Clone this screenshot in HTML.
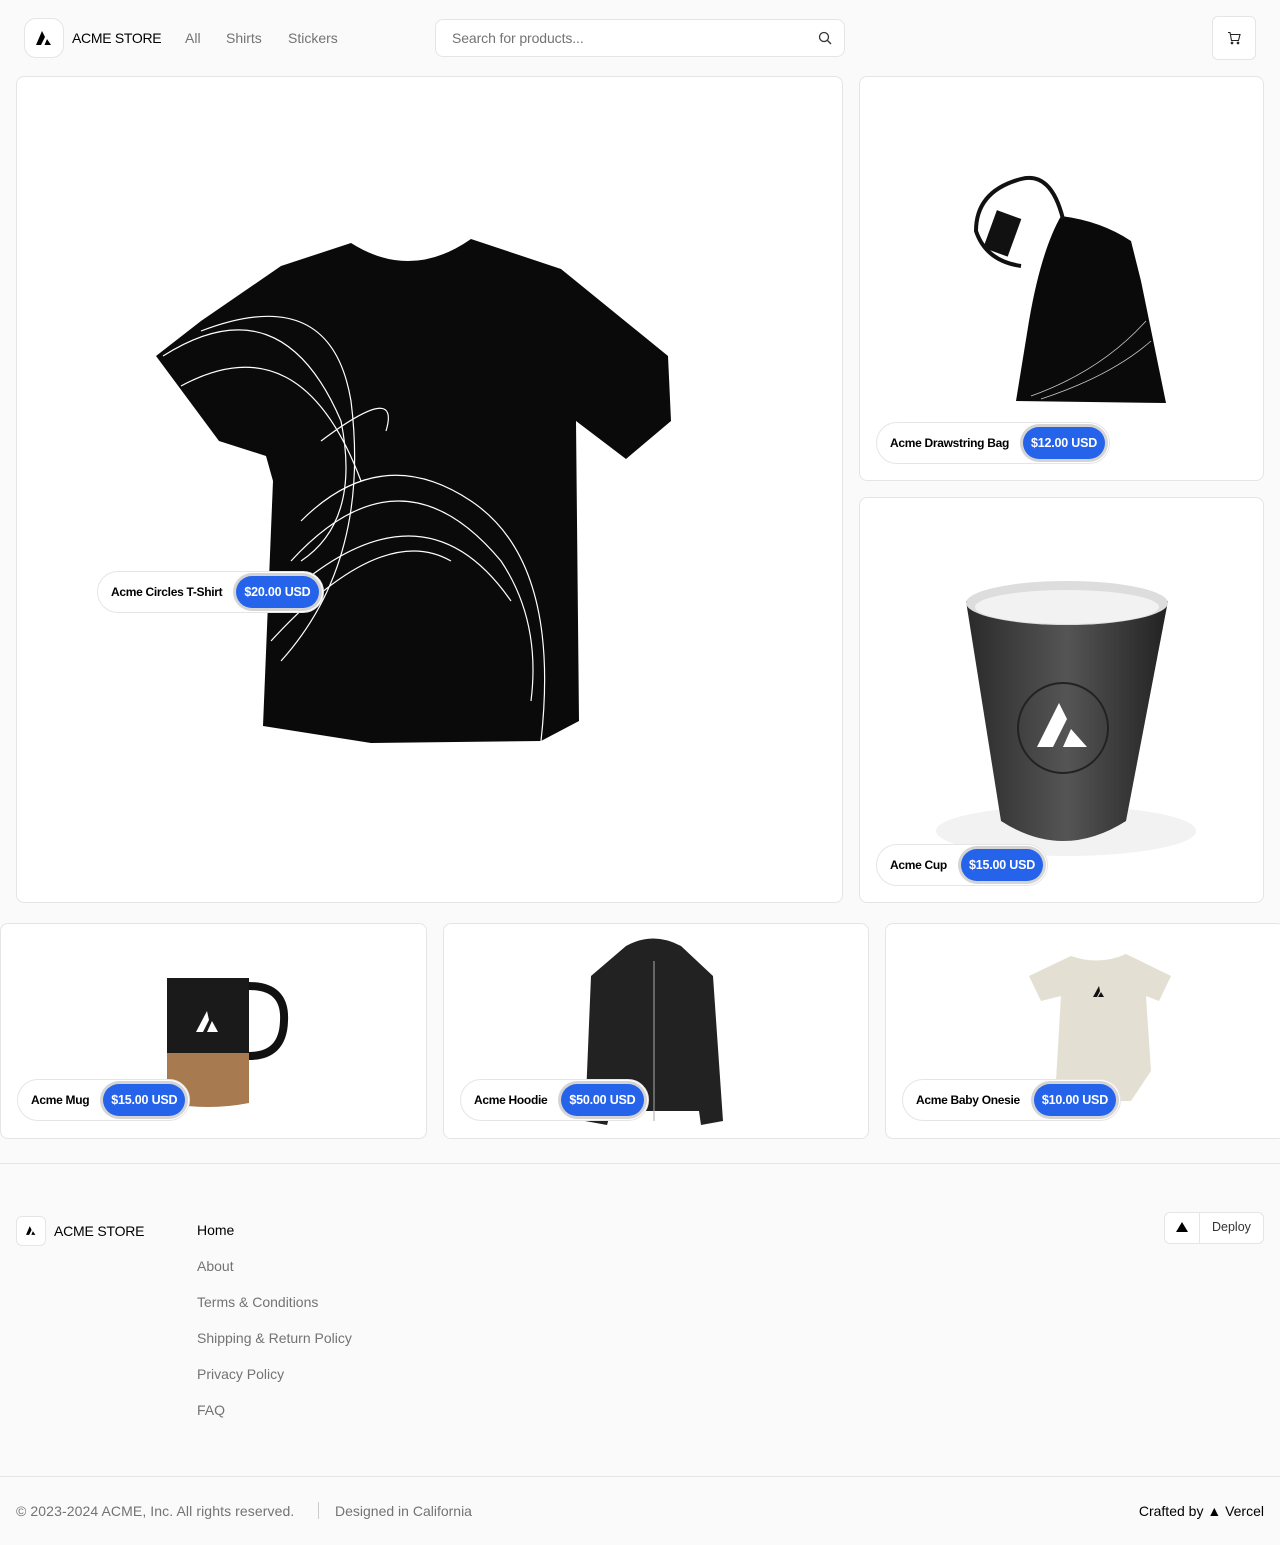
<!DOCTYPE html>
<html><head><meta charset="utf-8"><style>
*{box-sizing:border-box;margin:0;padding:0}
body{width:1280px;height:1545px;background:#fafafa;font-family:"Liberation Sans",sans-serif;position:relative;overflow:hidden;color:#000}
.abs{position:absolute}
.card{position:absolute;background:#fff;border:1px solid #e5e5e5;border-radius:8px;overflow:hidden}
.pill{position:absolute;display:flex;align-items:center;height:42px;background:#fff;border:1px solid #e5e5e5;border-radius:21px;padding:0 4px 0 13px;font-size:12px;font-weight:bold;letter-spacing:-0.3px}
.pill .n{margin-right:14px}
.pill .p{background:#2563eb;color:#fff;border-radius:17px;height:32px;line-height:32px;padding:0 8px;font-size:12.5px;font-weight:bold;box-shadow:0 0 0 3px #d4d4d4;letter-spacing:-0.2px}
.nav a{position:absolute;top:30px;font-size:14px;color:#737373}
.fl{position:absolute;left:197px;font-size:14px;color:#737373}
</style></head><body>
<div class="abs" style="left:24px;top:18px;width:40px;height:40px;border:1px solid #e5e5e5;border-radius:12px;background:#fff"></div>
<svg class="abs" style="left:36px;top:31px" width="16" height="14" viewBox="0 0 16 14"><path d="M6 0L0 14h5l4-8z M11 8l-2.5 6H15z" fill="#000"/></svg>
<div class="abs" style="left:72px;top:30px;font-size:14px;letter-spacing:-0.3px">ACME STORE</div>
<div class="nav"><a style="left:185px">All</a><a style="left:226px">Shirts</a><a style="left:288px">Stickers</a></div>
<div class="abs" style="left:435px;top:19px;width:410px;height:38px;border:1px solid #e5e5e5;border-radius:8px;background:#fff;font-size:14px;color:#737373;padding:10px 16px;letter-spacing:-0.1px">Search for products...</div>
<svg class="abs" style="left:818px;top:31px" width="14" height="14" viewBox="0 0 14 14" fill="none" stroke="#333" stroke-width="1.3"><circle cx="6" cy="6" r="4.5"/><path d="M9.5 9.5L13 13"/></svg>
<div class="abs" style="left:1212px;top:16px;width:44px;height:44px;border:1px solid #e5e5e5;border-radius:6px;background:#fff"></div>
<svg class="abs" style="left:1227px;top:31px" width="14" height="14" viewBox="0 0 14 14" fill="none" stroke="#222" stroke-width="1.1"><path d="M1 1.5h2l1.5 8h7l1.5-6H4"/><circle cx="5" cy="12" r="0.8"/><circle cx="11" cy="12" r="0.8"/></svg>

<div class="card" style="left:16px;top:76px;width:827px;height:827px">
<svg width="827" height="827" viewBox="16 76 827 827"><path d="M350 242Q410 280 470 238L560 268 667 355 670 420 625 458 575 420 578 720 540 740 370 742 262 725 272 480 265 455 218 440 155 355 200 320 280 265Z" fill="#0a0a0a"/>
<g fill="none" stroke="#fff" stroke-width="1.2"><path d="M162 355Q280 280 340 420 Q360 520 300 560"/><path d="M180 385Q300 320 360 480"/><path d="M200 330Q330 280 350 400 Q370 560 280 660"/><path d="M300 520Q380 440 470 500 Q560 560 540 740"/><path d="M290 560Q400 440 500 560 Q540 620 530 700"/><path d="M280 600Q420 470 510 600"/><path d="M270 640Q380 520 450 560"/><path d="M320 440Q400 380 385 430"/></g></svg>
<div class="pill" style="left:80px;top:494px"><span class="n">Acme Circles T-Shirt</span><span class="p">$20.00 USD</span></div>
</div>

<div class="card" style="left:859px;top:76px;width:405px;height:405px">
<svg width="405" height="405" viewBox="859 76 405 405"><path d="M1060 215Q1100 220 1130 240L1140 280 1165 402 1015 400 1028 320Q1040 250 1060 215Z" fill="#0a0a0a"/><path d="M1062 218Q1050 170 1020 178Q975 190 975 230Q985 260 1020 265" fill="none" stroke="#111" stroke-width="4"/><rect x="988" y="212" width="26" height="40" fill="#111" transform="rotate(20 1000 233)"/><g fill="none" stroke="#ccc" stroke-width="0.8"><path d="M1030 395Q1100 370 1145 320"/><path d="M1040 398Q1110 375 1150 340"/></g></svg>
<div class="pill" style="left:16px;top:345px"><span class="n">Acme Drawstring Bag</span><span class="p">$12.00 USD</span></div>
</div>

<div class="card" style="left:859px;top:497px;width:405px;height:406px">
<svg width="405" height="406" viewBox="859 497 405 406"><defs><linearGradient id="g" x1="0" x2="1"><stop offset="0" stop-color="#2a2a2a"/><stop offset=".5" stop-color="#555"/><stop offset="1" stop-color="#222"/></linearGradient></defs><ellipse cx="1065" cy="830" rx="130" ry="25" fill="#f2f2f2"/><path d="M965 600L1000 820Q1062 860 1125 820L1167 600Z" fill="url(#g)"/><ellipse cx="1066" cy="602" rx="101" ry="22" fill="#ddd"/><ellipse cx="1066" cy="606" rx="92" ry="17" fill="#f2f2f2"/><circle cx="1062" cy="727" r="45" fill="none" stroke="#222" stroke-width="2"/><path d="M1058 702L1036 746h16l14-28z M1070 728l-8 18h24z" fill="#fff"/></svg>
<div class="pill" style="left:16px;top:346px"><span class="n">Acme Cup</span><span class="p">$15.00 USD</span></div>
</div>

<div class="card" style="left:0;top:923px;width:427px;height:216px">
<svg width="427" height="216" viewBox="0 923 427 216"><path d="M248 985Q285 985 283 1020Q282 1055 248 1055" fill="none" stroke="#111" stroke-width="8"/><path d="M166 977h82v75H166z" fill="#1a1a1a"/><path d="M166 1052h82v50Q207 1110 166 1102z" fill="#a87a4f"/><path d="M206 1010l-11 21h7l6-12z M211 1020l-5 11h11z" fill="#fff"/></svg>
<div class="pill" style="left:16px;top:155px"><span class="n">Acme Mug</span><span class="p">$15.00 USD</span></div>
</div>

<div class="card" style="left:443px;top:923px;width:426px;height:216px">
<svg width="426" height="216" viewBox="443 923 426 216"><path d="M625 945Q652 930 680 945L712 975 722 1120 700 1124 698 1110 610 1110 606 1124 584 1120 590 975Z" fill="#222"/><path d="M653 960v160" stroke="#aaa" stroke-width="1"/></svg>
<div class="pill" style="left:16px;top:155px"><span class="n">Acme Hoodie</span><span class="p">$50.00 USD</span></div>
</div>

<div class="card" style="left:885px;top:923px;width:400px;height:216px">
<svg width="400" height="216" viewBox="885 923 400 216"><path d="M1070 955Q1098 965 1125 953L1170 975 1158 1000 1145 995 1150 1070 1130 1100 1080 1100 1055 1080 1060 995 1040 1000 1028 975Z" fill="#e4dfd3"/><path d="M1098 985l-6 11h4l3-6z M1100 991l-3 5h6z" fill="#111"/></svg>
<div class="pill" style="left:16px;top:155px"><span class="n">Acme Baby Onesie</span><span class="p">$10.00 USD</span></div>
</div>

<div class="abs" style="left:0;top:1163px;width:1280px;border-top:1px solid #e5e5e5"></div>
<div class="abs" style="left:16px;top:1216px;width:30px;height:30px;border:1px solid #e5e5e5;border-radius:6px;background:#fff"></div>
<svg class="abs" style="left:26px;top:1226px" width="10" height="9" viewBox="0 0 16 14"><path d="M6 0L0 14h5l4-8z M11 8l-2.5 6H15z" fill="#000"/></svg>
<div class="abs" style="left:54px;top:1223px;font-size:14px;letter-spacing:-0.2px">ACME STORE</div>
<div class="fl" style="top:1222px;color:#000">Home</div>
<div class="fl" style="top:1258px">About</div>
<div class="fl" style="top:1294px">Terms &amp; Conditions</div>
<div class="fl" style="top:1330px">Shipping &amp; Return Policy</div>
<div class="fl" style="top:1366px">Privacy Policy</div>
<div class="fl" style="top:1402px">FAQ</div>
<div class="abs" style="left:1164px;top:1212px;width:100px;height:32px;border:1px solid #e5e5e5;border-radius:6px;background:#fff"></div>
<div class="abs" style="left:1199px;top:1213px;height:30px;border-left:1px solid #e5e5e5"></div>
<svg class="abs" style="left:1176px;top:1222px" width="12" height="10"><path d="M6 0L12 10H0z" fill="#000"/></svg>
<div class="abs" style="left:1212px;top:1220px;font-size:12.5px;color:#333">Deploy</div>
<div class="abs" style="left:0;top:1476px;width:1280px;border-top:1px solid #e5e5e5"></div>
<div class="abs" style="left:16px;top:1503px;font-size:14px;color:#737373;letter-spacing:0.1px">© 2023-2024 ACME, Inc. All rights reserved.</div>
<div class="abs" style="left:318px;top:1502px;height:17px;border-left:1px solid #ccc"></div>
<div class="abs" style="left:335px;top:1503px;font-size:14px;color:#737373">Designed in California</div>
<div class="abs" style="right:16px;top:1503px;font-size:14px">Crafted by ▲ Vercel</div>
</body></html>
